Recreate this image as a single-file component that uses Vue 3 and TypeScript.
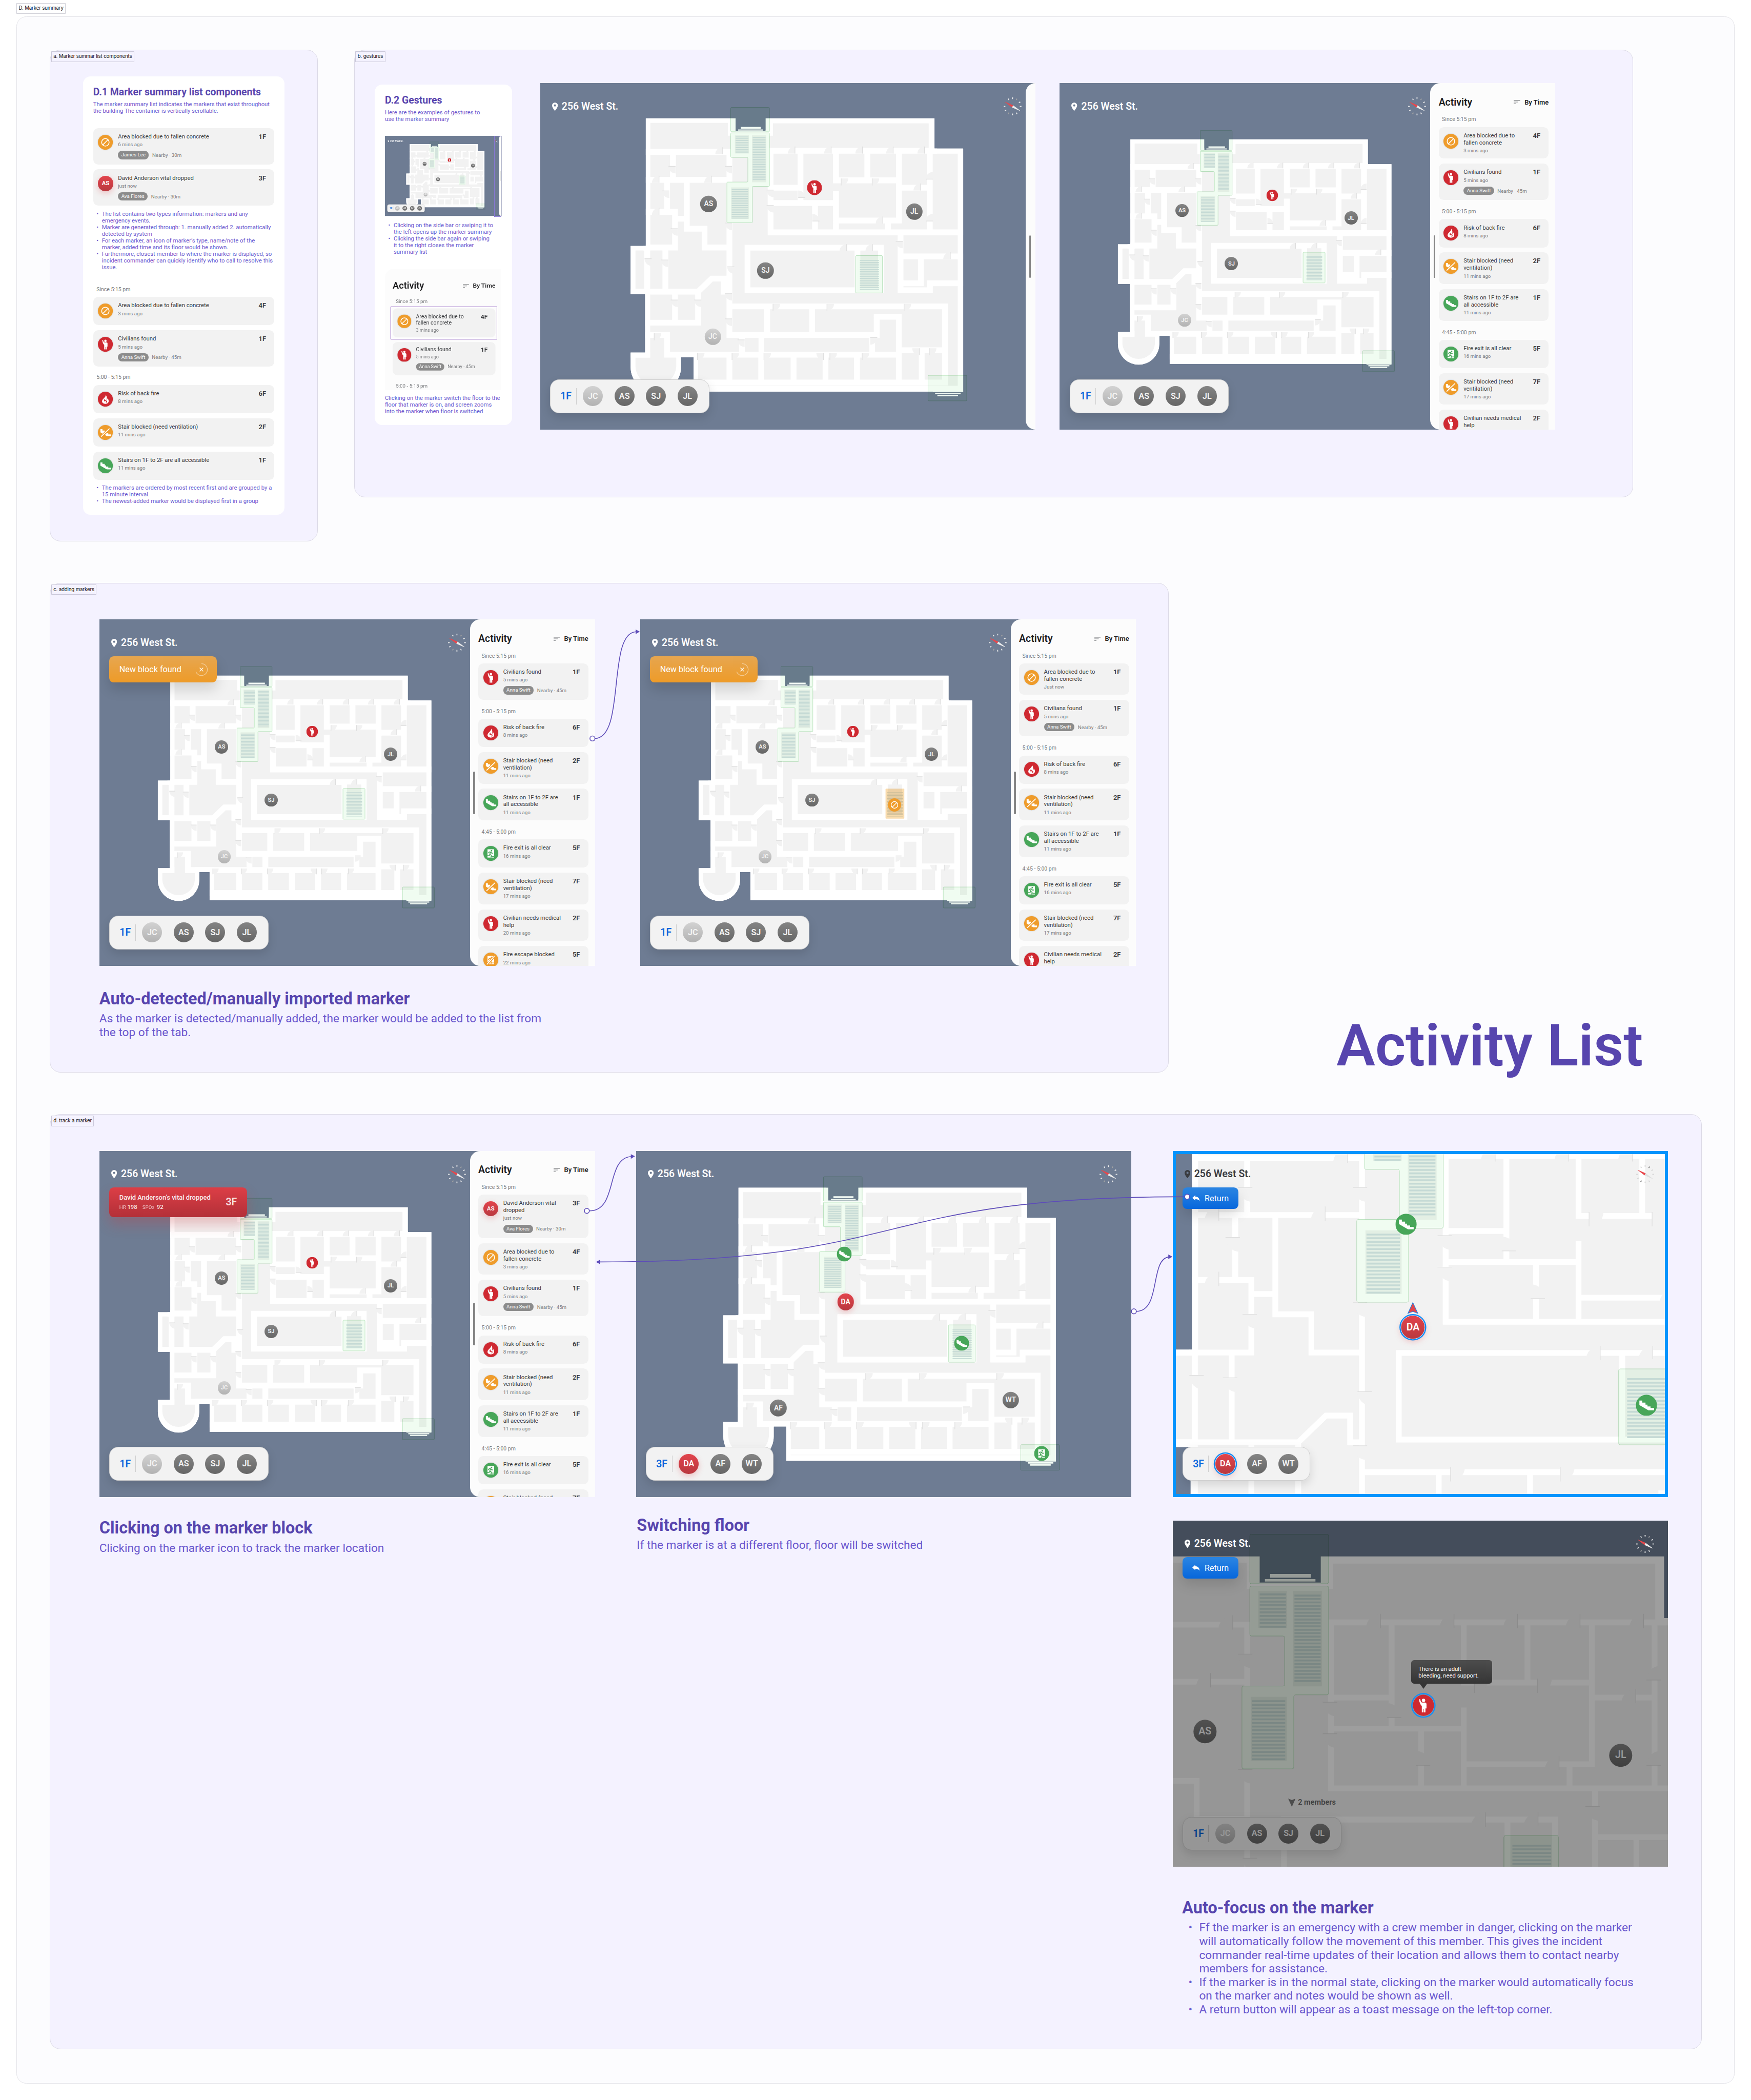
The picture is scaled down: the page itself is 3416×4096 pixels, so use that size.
<script setup lang="ts">
import { getCurrentInstance, type Component } from 'vue'

type Glyph = 'block' | 'person' | 'fire' | 'stairs' | 'noStairs' | 'exit' | 'noExit'
type Tone = 'member' | 'idle' | 'alert'

interface Entry {
  glyph?: Glyph
  initials?: string
  title: string
  time: string
  floor: string
  who?: string
  away?: string
}
interface Group {
  label: string
  entries: Entry[]
}
interface Pin {
  x: number
  y: number
  size: number
  glyph?: Glyph
  text?: string
  tone?: Tone
  ring?: boolean
}
interface Scene {
  map: { x: number; y: number; s: number }
  compass: number
  floor: string
  crew: { text: string; tone: Tone; ring?: boolean }[]
  pins: Pin[]
  groups?: Group[]
  sidebar?: boolean
  toast?: 'block' | 'vital' | 'return'
  dark?: boolean
  dim?: boolean
  framed?: boolean
  heading?: boolean
  highlight?: boolean
}

defineProps<{ scene?: Scene; entry?: Entry; glyph?: Glyph; groups?: Group[] }>()

// The component renders its own smaller parts: screens, lists, entries, glyphs.
const Part = getCurrentInstance()!.type as Component

/* ---------- floor plan geometry ---------- */
const outline =
  'M0 0H216.3V31.8H288.7V0H695.6V73H764.8V658.2H115.1V575.4H84.8V599.3A60.7 60.7 0 0 1 -36.6 599.3V564.4H-1.6V423.4H-36.6V307.7H0Z'
const floorArea =
  'M3.9 4H204.6V35H299.5V5H688.6V78.2H758.6V651.5H119V569.6H80.3V599.3A56.3 56.3 0 0 1 -32 599.3V569.6H3.5V417.7H-32V311.5H3.9Z'

const walls = [
  'M0 80.9H201.5V522.2', 'M65.4 80.9V148.4', 'M0 148.4H201.5', 'M51.3 148.4V225.4',
  'M0 225.4H70.4V311.3H0', 'M70.4 241.9H98.8', 'M98.8 148.4V266H141.6V311.3H201.5',
  'M3.5 311.3V417.7', 'M47.1 311.3V417.7', 'M-33 417.7H126L158.7 386.1H187.5V417.7H201.5',
  'M126 417.7V492.3H0', 'M70.4 417.7V492.3', 'M0 522.2H51.3V569.6H609.6', 'M-33 569.6H3.5',
  'M201.5 569.6V636.5', 'M278.1 569.6V636.5', 'M356 569.6V636.5', 'M433 569.6V636.5',
  'M508.8 569.6V636.5', 'M609.6 478V636.5', 'M664.8 558.9V636.5', 'M609.6 558.9H720.8',
  'M115 636.5H720.8', 'M201.5 453.1H720.8V636.5', 'M292.5 453.1V522.2', 'M400.7 453.1V522.2',
  'M201.5 522.2H556.3V478H609.6', 'M545.4 522.2V569.6', 'M278.5 522.2V569.6', 'M231.8 522.2V569.6',
  'M245.1 311.8H566.4V414.4H245.1Z', 'M510 311.8V414.4',
  'M300.7 78.2H695', 'M300.7 78.2V274.8H764', 'M372.7 78.2V204', 'M300.7 167.3H372.7',
  'M300.7 204H458.2', 'M407.7 204V274.8', 'M458.2 78.2V149.5H610', 'M458.2 182.500V274.8',
  'M533.7 78.2V149.5', 'M610 78.2V246.3H458.2', 'M583.5 246.3V274.8', 'M610 167.3H684.3',
  'M684.3 78.2V274.8', 'M613.8 274.8V414.4H684.6V397.4H764', 'M613.8 332.7H764',
  'M662.8 332.7V397.4H613.8',
].join('')

// x, y of the hinge, quadrant the leaf sweeps, and direction of the leaf
type Door = [number, number, 'ul' | 'ur' | 'dl' | 'dr', 'v' | 'h']
const doors: Door[] = [
  [184.4, 86.7, 'ul', 'v'], [31.9, 155.2, 'ul', 'v'], [157.9, 155.2, 'ul', 'v'], [31.9, 232.6, 'ul', 'v'],
  [359.4, 85, 'ul', 'v'], [446.6, 85, 'ul', 'v'], [522, 85, 'ul', 'v'], [596, 85, 'ul', 'v'], [671.4, 85, 'ul', 'v'],
  [662.1, 173.9, 'ul', 'v'], [571.1, 253.4, 'ul', 'v'], [483.9, 320.3, 'ul', 'v'], [546.2, 320.3, 'ul', 'v'],
  [733.7, 339.5, 'ul', 'v'], [470.7, 144.8, 'dr', 'v'], [545.4, 144.8, 'dr', 'v'], [20.2, 517.8, 'dr', 'v'],
  [306.5, 447, 'dr', 'v'], [436.5, 447, 'dr', 'v'], [622.4, 447, 'dr', 'v'], [124.5, 565, 'dr', 'v'],
  [207.7, 565, 'dr', 'v'], [284.7, 565, 'dr', 'v'], [443.5, 565, 'dr', 'v'], [521.3, 565, 'dr', 'v'],
  [683.1, 554, 'dr', 'v'], [427.9, 565, 'dl', 'v'], [659, 554, 'dl', 'v'],
  [71.6, 115.7, 'dl', 'h'], [207.7, 115.7, 'dl', 'h'], [56.8, 175, 'dl', 'h'], [77, 266, 'dl', 'h'],
  [207.7, 252.3, 'dl', 'h'], [308.1, 172.8, 'dl', 'h'], [308.1, 210.1, 'dl', 'h'], [619.3, 296.2, 'dl', 'h'],
  [53.7, 341.2, 'dl', 'h'], [14, 338.4, 'dl', 'h'], [77, 437.7, 'dl', 'h'], [133.8, 437.7, 'dl', 'h'],
  [207.7, 421.8, 'dl', 'h'], [207.7, 483.2, 'dl', 'h'], [238.1, 533.7, 'dl', 'h'], [213.2, 357.6, 'dl', 'h'],
  [540.7, 528.2, 'dr', 'h'], [691.7, 146.5, 'ul', 'h'], [691.7, 247.4, 'ul', 'h'],
  [401.4, 247.4, 'ur', 'h'], [367.2, 190.9, 'ur', 'h'],
]
const R = 17
const sweeps = doors
  .map(([x, y, q]) => {
    const dx = q[1] === 'l' ? -R : R
    const dy = q[0] === 'u' ? -R : R
    const flag = dx * dy > 0 ? 1 : 0
    return `M${x} ${y}H${x + dx}A${R} ${R} 0 0 ${flag} ${x} ${y + dy}Z`
  })
  .join('')
const leaves = doors
  .map(([x, y, q, axis]) =>
    axis === 'v' ? `M${x} ${y}v${q[0] === 'u' ? -R : R}` : `M${x} ${y}h${q[1] === 'l' ? -R : R}`,
  )
  .join('')

const flight = (x1: number, x2: number, y: number, count: number, pitch: number) =>
  Array.from({ length: count }, (_, i) => `M${x1} ${(y + i * pitch).toFixed(1)}H${x2}`).join('')
const treads = [
  flight(216.3, 247.4, 45, 10, 4.25),
  flight(257.5, 288.6, 46.4, 26, 4.05),
  flight(206.9, 246.6, 171.5, 17, 4.3),
  flight(515.8, 561.8, 342.8, 17, 4.3),
].join('')
const shaft =
  'M206.6 35.1H296a2 2 0 0 1 2 2V162a2 2 0 0 1 -2 2H258.7a2 2 0 0 0 -2 2V249.7a2 2 0 0 1 -2 2H197.3a2 2 0 0 1 -2 -2V155.6a2 2 0 0 1 2 -2H243.9a2 2 0 0 0 2 -2V96.3a2 2 0 0 0 -2 -2H206.6a2 2 0 0 1 -2 -2V37.1a2 2 0 0 1 2 -2Z'

const ticks = Array.from({ length: 12 }, (_, i) => i * 30).filter((a) => a !== 120 && a !== 300)

/* ---------- activity entries ---------- */
const risk: Entry = { glyph: 'fire', title: 'Risk of back fire', time: '8 mins ago', floor: '6F' }
const civilians: Entry = { glyph: 'person', title: 'Civilians found', time: '5 mins ago', floor: '1F', who: 'Anna Swift', away: '45m' }
const concrete: Entry = { glyph: 'block', title: 'Area blocked due to\nfallen concrete', time: '3 mins ago', floor: '4F' }
const stair2: Entry = { glyph: 'noStairs', title: 'Stair blocked (need\nventilation)', time: '11 mins ago', floor: '2F' }
const stairsOk: Entry = { glyph: 'stairs', title: 'Stairs on 1F to 2F are\nall accessible', time: '11 mins ago', floor: '1F' }
const exitClear: Entry = { glyph: 'exit', title: 'Fire exit is all clear', time: '16 mins ago', floor: '5F' }
const stair7: Entry = { glyph: 'noStairs', title: 'Stair blocked (need\nventilation)', time: '17 mins ago', floor: '7F' }
const medical: Entry = { glyph: 'person', title: 'Civilian needs medical\nhelp', time: '20 mins ago', floor: '2F' }
const escape: Entry = { glyph: 'noExit', title: 'Fire escape blocked', time: '22 mins ago', floor: '5F' }
const vital: Entry = { initials: 'AS', title: 'David Anderson vital\ndropped', time: 'just now', floor: '3F', who: 'Ava Flores', away: '30m' }

const middle: Group = { label: '5:00 - 5:15 pm', entries: [risk, stair2, stairsOk] }
const earlier: Group = { label: '4:45 - 5:00 pm', entries: [exitClear, stair7, medical, escape] }
const feed = (recent: Entry[]): Group[] => [{ label: 'Since 5:15 pm', entries: recent }, middle, earlier]

const samples: Entry[] = [
  { glyph: 'block', title: 'Area blocked due to fallen concrete', time: '6 mins ago', floor: '1F', who: 'James Lee', away: '30m' },
  { initials: 'AS', title: 'David Anderson vital dropped', time: 'just now', floor: '3F', who: 'Ava Flores', away: '30m' },
]
const sampleGroups: Group[] = [
  { label: 'Since 5:15 pm', entries: [{ ...concrete, title: 'Area blocked due to fallen concrete' }, civilians] },
  {
    label: '5:00 - 5:15 pm',
    entries: [
      risk,
      { ...stair2, title: 'Stair blocked (need ventilation)' },
      { ...stairsOk, title: 'Stairs on 1F to 2F are all accessible' },
    ],
  },
]
const snippet: Group[] = [
  { label: 'Since 5:15 pm', entries: [concrete, civilians] },
  { label: '5:00 - 5:15 pm', entries: [] },
]

/* ---------- screens ---------- */
const firstFloorCrew: Scene['crew'] = [
  { text: 'JC', tone: 'idle' },
  { text: 'AS', tone: 'member' },
  { text: 'SJ', tone: 'member' },
  { text: 'JL', tone: 'member' },
]
const smallPins: Pin[] = [
  { x: 294.7, y: 306.7, size: 32, text: 'AS', tone: 'member' },
  { x: 701.8, y: 324.8, size: 32, text: 'JL', tone: 'member' },
  { x: 413.8, y: 435, size: 32, text: 'SJ', tone: 'member' },
  { x: 301, y: 571, size: 32, text: 'JC', tone: 'idle' },
  { x: 512.6, y: 270, size: 28, glyph: 'person' },
]
const smallMap = { x: 170.8, y: 135.5, s: 0.8225 }

const collapsed: Scene = {
  map: { x: 254.3, y: 84.9, s: 1 },
  compass: 1138,
  floor: '1F',
  crew: firstFloorCrew,
  sidebar: true,
  pins: [
    { x: 406, y: 290.6, size: 40, text: 'AS', tone: 'member' },
    { x: 901.6, y: 309.8, size: 40, text: 'JL', tone: 'member' },
    { x: 543, y: 451.8, size: 40, text: 'SJ', tone: 'member' },
    { x: 416, y: 611, size: 40, text: 'JC', tone: 'idle' },
    { x: 661.2, y: 252.2, size: 36, glyph: 'person' },
  ],
}
const withPanel = (recent: Entry[], extra: Partial<Scene> = {}): Scene => ({
  map: smallMap,
  compass: 861,
  floor: '1F',
  crew: firstFloorCrew,
  pins: smallPins,
  groups: feed(recent),
  ...extra,
})
const expanded = withPanel([concrete, civilians])
const beforeImport = withPanel([civilians], { toast: 'block' })
const afterImport = withPanel([{ ...concrete, time: 'Just now', floor: '1F' }, civilians], {
  toast: 'block',
  highlight: true,
  pins: [...smallPins, { x: 612.8, y: 446.6, size: 32, glyph: 'block' }],
})
const vitalAlert = withPanel([vital, concrete, civilians], { toast: 'vital' })
const switched: Scene = {
  map: { x: 246.7, y: 88.2, s: 1 },
  compass: 1138,
  floor: '3F',
  crew: [
    { text: 'DA', tone: 'alert' },
    { text: 'AF', tone: 'member' },
    { text: 'WT', tone: 'member' },
  ],
  pins: [
    { x: 502, y: 249, size: 36, glyph: 'stairs' },
    { x: 785, y: 463, size: 36, glyph: 'stairs' },
    { x: 977.8, y: 729, size: 36, glyph: 'exit' },
    { x: 505, y: 364, size: 40, text: 'DA', tone: 'alert' },
    { x: 343, y: 619.7, size: 40, text: 'AF', tone: 'member' },
    { x: 903, y: 600, size: 40, text: 'WT', tone: 'member' },
  ],
}
const tracking: Scene = {
  map: { x: 46.1, y: -147.4, s: 2.033 },
  compass: 1138,
  floor: '3F',
  dark: true,
  framed: true,
  heading: true,
  toast: 'return',
  crew: [
    { text: 'DA', tone: 'alert', ring: true },
    { text: 'AF', tone: 'member' },
    { text: 'WT', tone: 'member' },
  ],
  pins: [
    { x: 563, y: 176.7, size: 51, glyph: 'stairs' },
    { x: 1141.8, y: 613, size: 51, glyph: 'stairs' },
    { x: 579, y: 425, size: 56, text: 'DA', tone: 'alert', ring: true },
  ],
}
const focused: Scene = {
  map: { x: -230.4, y: 86.2, s: 2.033 },
  compass: 1138,
  floor: '1F',
  dim: true,
  toast: 'return',
  crew: firstFloorCrew,
  pins: [
    { x: 78, y: 508, size: 56, text: 'AS', tone: 'member' },
    { x: 1079.6, y: 565, size: 56, text: 'JL', tone: 'member' },
  ],
}
</script>

<template>
  <!-- Marker glyph -->
  <svg v-if="glyph" class="glyph" viewBox="0 0 36 36">
    <circle cx="18" cy="18" r="18" :class="['disc', glyph]" />
    <g v-if="glyph === 'block'" fill="none" stroke="#fff" stroke-width="2">
      <circle cx="18" cy="18" r="9" />
      <path d="M11.8 24.2 24.2 11.8" />
    </g>
    <g v-else-if="glyph === 'person'" fill="#fff">
      <circle cx="18.1" cy="9.8" r="2.9" />
      <path d="M15.4 13.4H20.4C22.2 13.4 23.2 14.5 23.2 16.2V23.4H21.4V30.2H18.7V24.4H18V30.2H15.2V19.4C12.8 17.4 11.2 13.6 10.4 8L12.4 7.5C13 10.9 13.9 12.7 15.4 13.4Z" />
    </g>
    <g v-else-if="glyph === 'fire'">
      <path fill="#fff" d="M18.8 7.6C19 10.6 17.6 12.4 15.6 14.6 12.8 17.6 10 19.4 10 23.2 10 26.9 13.4 29.2 18 29.2S26 26.4 26 22.8C26 19.8 24.8 17.6 23 16 23 18.4 22 19.6 20.8 19.6 22.2 15.2 21.8 10.8 18.8 7.6Z" />
      <path fill="#cf2931" d="M16.8 17C14.8 19.2 14.4 21 15.4 22.8 16.2 24.2 18.2 23.6 18 21.8 20.4 22.8 20.6 25.6 18.6 26.6 21.8 26.6 22.8 24 21.4 21.6 19.2 21.8 16.6 20.2 16.8 17Z" />
    </g>
    <g v-else-if="glyph === 'stairs' || glyph === 'noStairs'">
      <path fill="#fff" d="M6 10H10.9V13.4H16.4V16.9H19.8V19.9H25V22.6H31V26.6H21.3L6 17.6Z" />
      <template v-if="glyph === 'noStairs'">
        <path stroke="#ef9c2b" stroke-width="6" d="M8 28.6 28 8.4" />
        <path stroke="#fff" stroke-width="2.2" d="M7.6 28 28 8.4" />
      </template>
    </g>
    <g v-else>
      <path fill="#fff" d="M10 8H26V28H10Z" />
      <g :class="['runner', glyph]" fill="none" stroke-width="2">
        <path d="M12 17.2 14.2 14.3 18 14.8 20.4 17.6 23.6 17.2M17.2 15 15.4 20 19.2 22.6 18.2 28M15.6 20 14.4 23.2 10 23.6M20 25H26" />
        <circle cx="19.6" cy="11.4" r=".9" />
      </g>
      <template v-if="glyph === 'noExit'">
        <path stroke="#ef9c2b" stroke-width="5" d="M9 29 27 8.6" />
        <path stroke="#fff" stroke-width="2" d="M8.4 28.6 27 8" />
      </template>
    </g>
  </svg>

  <!-- One activity entry -->
  <article v-else-if="entry" class="entry">
    <span v-if="entry.initials" class="avatar alert entry-avatar">{{ entry.initials }}</span>
    <Part v-else class="entry-icon" :glyph="entry.glyph" />
    <div class="entry-body">
      <div class="entry-title">{{ entry.title }}</div>
      <div class="entry-time">{{ entry.time }}</div>
      <div v-if="entry.who" class="near">
        <span class="who">{{ entry.who }}</span>
        <span>Nearby · {{ entry.away }}</span>
      </div>
    </div>
    <div class="entry-floor">{{ entry.floor }}</div>
  </article>

  <!-- Activity list -->
  <div v-else-if="groups" class="list">
    <div class="list-head">
      <div class="list-title">Activity</div>
      <svg class="sort" viewBox="0 0 16 10"><path d="M0 1H15.5M0 5H10.5M0 9H5" /></svg>
      <div class="sort-by">By Time</div>
    </div>
    <section v-for="g in groups" :key="g.label" class="group">
      <div class="group-label">{{ g.label }}</div>
      <Part v-for="(e, i) in g.entries" :key="i" :entry="e" />
    </section>
  </div>

  <!-- Tablet screen -->
  <div v-else-if="scene" class="screen" :class="{ dark: scene.dark, dim: scene.dim }">
    <svg class="map" viewBox="0 0 1194 834">
      <defs>
        <clipPath :id="`shell-${scene.map.x}`"><path :d="outline" /></clipPath>
      </defs>
      <rect width="1194" height="834" fill="#6e7c93" />
      <g :transform="`translate(${scene.map.x} ${scene.map.y}) scale(${scene.map.s})`">
        <path :d="outline" fill="#fff" />
        <g :clip-path="`url(#shell-${scene.map.x})`">
          <path :d="floorArea" fill="#f2f2f2" stroke="#fff" :stroke-width="14 / scene.map.s" />
          <path :d="walls" fill="none" stroke="#fff" stroke-linecap="square" :stroke-width="14 / scene.map.s" />
        </g>
        <path :d="sweeps" fill="#f2f2f2" />
        <path :d="leaves" fill="none" stroke="#dedede" :stroke-width="1.5 / scene.map.s" />
        <path :d="shaft" fill="#fff" />
        <path fill="#f2f2f2" d="M214.6 41H248.6V84.7H214.6ZM255.9 41H290V154H255.9ZM205.6 166.5H248.5V242H205.6Z" />
        <path d="M517.4 319H559.4V407H517.4Z" fill="#f2f2f2" />
        <path :d="treads" fill="none" stroke="#d2dde2" stroke-width="2.2" />
        <g class="tint">
          <rect x="204.6" y="-26.3" width="93.4" height="58.7" rx="2" />
          <path :d="shaft" />
          <rect v-if="scene.highlight" class="hot" x="511" y="331" width="55" height="88" rx="2" />
          <rect v-else x="505.7" y="330.7" width="64.6" height="90" rx="2" />
          <rect x="680" y="619.2" width="93.4" height="61.5" rx="2" />
        </g>
        <g class="tint-line" :stroke-width="1 / scene.map.s">
          <rect x="204.6" y="-26.3" width="93.4" height="58.7" rx="2" />
          <path :d="shaft" />
          <rect v-if="!scene.highlight" x="505.7" y="330.7" width="64.6" height="90" rx="2" />
          <rect x="680" y="619.2" width="93.4" height="61.5" rx="2" />
        </g>
        <path fill="#f2fbf4" d="M228.7 20.8H277V25.2H228.7ZM222.5 26.9H282.4V29.8H222.5ZM216.3 31H288.7V32.2H216.3ZM691.6 658H764.8V660H691.6ZM697.1 661.4H758.6V664.8H697.1ZM702.5 666.4H752.3V669.8H702.5Z" />
      </g>
    </svg>

    <template v-for="(p, i) in scene.pins" :key="i">
      <Part v-if="p.glyph" class="pin" :glyph="p.glyph" :style="{ left: p.x + 'px', top: p.y + 'px', width: p.size + 'px', height: p.size + 'px' }" />
      <span
        v-else
        class="avatar pin"
        :class="[p.tone, { ring: p.ring }]"
        :style="{ left: p.x + 'px', top: p.y + 'px', width: p.size + 'px', height: p.size + 'px', fontSize: p.size * 0.43 + 'px' }"
        >{{ p.text }}</span
      >
    </template>
    <svg v-if="scene.heading" class="heading" viewBox="0 0 28 30">
      <path d="M14 2 26 28 14 23.5 2 28Z" fill="#e0454c" stroke="#1a86e8" stroke-width="1.4" />
    </svg>

    <div class="roster">
      <span class="roster-floor">{{ scene.floor }}</span>
      <i class="rule"></i>
      <span v-for="c in scene.crew" :key="c.text" class="avatar" :class="[c.tone, { ring: c.ring }]">{{ c.text }}</span>
    </div>

    <template v-if="scene.dim">
      <div class="offscreen">
        <svg viewBox="0 0 18 20"><path d="M9 20 0 0 9 3.6 18 0Z" fill="#7d7d7d" /></svg>
        2 members
      </div>
      <div class="veil"></div>
      <div class="tip">There is an adult<br />bleeding, need support.</div>
      <Part class="pin target" glyph="person" style="left: 604px; top: 445px" />
    </template>

    <div class="place">
      <svg viewBox="0 0 14 20"><path fill-rule="evenodd" d="M7 0A7 7 0 0 0 0 7C0 12 7 20 7 20S14 12 14 7A7 7 0 0 0 7 0ZM7 4.4A2.6 2.6 0 1 1 7 9.6 2.6 2.6 0 0 1 7 4.4Z" /></svg>
      256 West St.
    </div>
    <svg class="compass" viewBox="-24 -24 48 48" :style="{ left: scene.compass - 24 + 'px' }">
      <path v-for="a in ticks" :key="a" class="tick" :class="{ faint: a === 30 || a === 210 }" d="M-1.3 -21.4H1.3L.9 -17.4H-.9Z" :transform="`rotate(${a})`" />
      <g transform="rotate(30.5)">
        <path fill="#e8474c" d="M-20.6 -.4 0 -2.8V2.8L-20.6 .4Z" />
        <path class="tail" d="M20.6 -.4 0 -2.8V2.8L20.6 .4Z" />
      </g>
    </svg>

    <div v-if="scene.toast === 'block'" class="toast block">
      New block found
      <svg viewBox="0 0 32 32">
        <path d="M16 1.6A14.4 14.4 0 1 1 2.6 21.2" fill="none" stroke="#fff" stroke-opacity=".45" stroke-width="1.6" />
        <path d="M11.8 11.8 20.2 20.2M20.2 11.8 11.8 20.2" stroke="#fff" stroke-width="1.6" />
      </svg>
    </div>
    <div v-else-if="scene.toast === 'vital'" class="toast vital">
      <div>
        <b>David Anderson’s vital dropped</b>
        <p><small>HR</small> 198 <small class="spo">SPO<sub>2</sub></small> 92</p>
      </div>
      <strong>3F</strong>
    </div>
    <div v-else-if="scene.toast === 'return'" class="toast return">
      <svg viewBox="0 0 18 15"><path fill="#fff" d="M7.4 0V3.6C13 3.6 17.4 6.6 17.6 14.6 15.6 10.8 12.4 9.6 7.4 9.8V13.4L0 6.7Z" /></svg>
      Return
    </div>

    <aside v-if="scene.groups || scene.sidebar" class="panel" :class="{ slim: scene.sidebar }">
      <i class="handle"></i>
      <Part v-if="scene.groups" :groups="scene.groups" />
    </aside>
    <div v-if="scene.framed" class="frame"></div>
  </div>

  <!-- Whole board -->
  <main v-else class="board">
    <div class="tag">D. Marker summary</div>
    <div class="sheet">
      <div class="row">
        <section class="area area-a">
          <div class="tag inner">a. Marker summar list components</div>
          <div class="card">
            <h2>D.1 Marker summary list components</h2>
            <p class="note">The marker summary list indicates the markers that exist throughout<br />the building The container is vertically scrollable.</p>
            <div class="stack">
              <Part v-for="(e, i) in samples" :key="i" :entry="e" />
            </div>
            <ul class="note">
              <li>The list contains two types information: markers and any<br />emergency events.</li>
              <li>Marker are generated through: 1. manually added 2. automatically<br />detected by system</li>
              <li>For each marker, an icon of marker’s type, name/note of the<br />marker, added time and its floor would be shown.</li>
              <li>Furthermore, closest member to where the marker is displayed, so<br />incident commander can quickly identify who to call to resolve this<br />issue.</li>
            </ul>
            <div class="sample-groups">
              <section v-for="g in sampleGroups" :key="g.label" class="group">
                <div class="group-label">{{ g.label }}</div>
                <Part v-for="(e, i) in g.entries" :key="i" :entry="e" />
              </section>
            </div>
            <ul class="note">
              <li>The markers are ordered by most recent first and are grouped by a<br />15 minute interval.</li>
              <li>The newest-added marker would be displayed first in a group</li>
            </ul>
          </div>
        </section>

        <section class="area area-b">
          <div class="tag inner">b. gestures</div>
          <div class="card gestures">
            <h2>D.2 Gestures</h2>
            <p class="note">Here are the examples of gestures to<br />use the marker summary</p>
            <div class="thumb"><Part :scene="collapsed" /><i class="thumb-mark"></i></div>
            <ul class="note">
              <li>Clicking on the side bar or swiping it to<br />the left opens up the marker summary</li>
              <li>Clicking the side bar again or swiping<br />it to the right closes the marker<br />summary list</li>
            </ul>
            <div class="excerpt"><Part :groups="snippet" /><i class="excerpt-mark"></i></div>
            <p class="note">Clicking on the marker switch the floor to the<br />floor that marker is on, and screen zooms<br />into the marker when floor is switched</p>
          </div>
          <Part :scene="collapsed" />
          <Part class="next" :scene="expanded" />
        </section>
      </div>

      <div class="row row-c">
        <section class="area area-c">
          <div class="tag inner">c. adding markers</div>
          <div class="col">
            <Part :scene="beforeImport" />
            <div class="caption cap-c">
              <h3>Auto-detected/manually imported marker</h3>
              <p>As the marker is detected/manually added, the marker would be added to the list from<br />the top of the tab.</p>
            </div>
          </div>
          <Part :scene="afterImport" />
        </section>
        <h1>Activity List</h1>
      </div>

      <section class="area area-d">
        <div class="tag inner">d. track a marker</div>
        <div class="col">
          <Part :scene="vitalAlert" />
          <div class="caption cap-d1">
            <h3>Clicking on the marker block</h3>
            <p>Clicking on the marker icon to track the marker location</p>
          </div>
        </div>
        <div class="col">
          <Part :scene="switched" />
          <div class="caption cap-d2">
            <h3>Switching floor</h3>
            <p>If the marker is at a different floor, floor will be switched</p>
          </div>
        </div>
        <div class="col">
          <Part :scene="tracking" />
          <Part class="below" :scene="focused" />
          <div class="caption cap-d3">
            <h3>Auto-focus on the marker</h3>
            <ul>
              <li>Ff the marker is an emergency with a crew member in danger, clicking on the marker<br />will automatically follow the movement of this member. This gives the incident<br />commander real-time updates of their location and allows them to contact nearby<br />members for assistance.</li>
              <li>If the marker is in the normal state, clicking on the marker would automatically focus<br />on the marker and notes would be shown as well.</li>
              <li>A return button will appear as a toast message on the left-top corner.</li>
            </ul>
          </div>
        </div>
      </section>
    </div>

    <svg class="links" viewBox="0 0 4219 5059">
      <g fill="none" stroke="#5d4cb9" stroke-width="2">
        <path d="M1433 1779C1508 1779 1462 1526 1532 1522" />
        <path d="M1420 2917C1490 2917 1458 2792 1520 2786" />
        <path d="M2855 2883C2090 2883 2206 3040 1444 3040" />
        <path d="M2738 3159C2798 3159 2770 3034 2816 3028" />
      </g>
      <g fill="#fff" stroke="#5d4cb9" stroke-width="2">
        <circle cx="1427.5" cy="1779" r="6" />
        <circle cx="1414" cy="2917" r="6" />
        <circle cx="2860.5" cy="2883" r="6" />
        <circle cx="2732" cy="3159" r="6" />
      </g>
      <path fill="#5d4cb9" d="M1541.500 1521.500 1531.500 1516.500V1527.500ZM1530 2785.500 1520 2780.500V2791.500ZM1436 3040 1446 3034.500V3045.500ZM2825 3027.500 2815 3022V3033Z" />
    </svg>
  </main>
</template>

<style>
html,
body {
  margin: 0;
  background: #fff;
}
</style>

<style scoped>
* {
  box-sizing: border-box;
}
h1,
h2,
h3,
p,
ul {
  margin: 0;
  padding: 0;
}
.board {
  position: relative;
  width: 4220px;
  height: 5059px;
  padding: 8px 40px 0;
  zoom: 0.80967;
  overflow: hidden;
  background: #fff;
  font-family: Roboto, 'Liberation Sans', sans-serif;
  color: #37393c;
}
.tag {
  width: max-content;
  height: 25.5px;
  padding: 0 4px;
  border: 1px solid #d0d0d8;
  border-radius: 1px;
  font: 12px/23px Inter, 'Liberation Sans', sans-serif;
  letter-spacing: -0.2px;
  color: #111;
}
.tag.inner {
  position: absolute;
  left: 2px;
  top: 2px;
  background: #f4f2ff;
  border-color: #cbc9da;
}
.sheet {
  width: 4139px;
  height: 4979px;
  margin-top: 6.5px;
  padding: 79px;
  border: 1px solid #e3e3e8;
  border-radius: 24px;
  background: #fcfcfe;
}
.row {
  display: flex;
  gap: 88px;
  height: 1184px;
  align-items: flex-start;
}
.row-c {
  height: 1180px;
  margin: 100px 0;
}
.area {
  position: relative;
  display: flex;
  align-items: flex-start;
  flex: none;
  border: 1px solid #dcdae6;
  border-radius: 26px;
  background: #f4f2ff;
}
.area-a {
  width: 645px;
  height: 1184px;
  padding: 63px 79px;
}
.area-b {
  width: 3082px;
  height: 1078px;
  padding: 79px 49px;
}
.area-c {
  width: 2696px;
  height: 1180px;
  padding: 87px 118px;
  gap: 109px;
}
.area-d {
  width: 3980px;
  height: 2253px;
  padding: 87px 118px;
  gap: 99px;
}
.col {
  width: 1194px;
}
.next {
  margin-left: 58px;
}
.below {
  margin-top: 57px;
}

/* Text cards */
.card {
  width: 485px;
  height: 1056px;
  padding: 21px 24px;
  border-radius: 18px;
  background: #fff;
}
h2 {
  font: 700 24px/34px Roboto, sans-serif;
  color: #5745ae;
  white-space: nowrap;
}
.note {
  font-size: 14px;
  line-height: 16px;
  color: #6a57ce;
  white-space: nowrap;
}
ul {
  list-style: none;
}
.card ul {
  padding-left: 21px;
}
li {
  position: relative;
}
li::before {
  content: '•';
  position: absolute;
  left: -13px;
}
.stack {
  display: flex;
  flex-direction: column;
  gap: 12px;
  margin: 33px 0 12px;
}
.card h2 + .note {
  padding-top: 4px;
}
.sample-groups {
  margin: 38px 0 12px;
}
.sample-groups .group .group-label {
  margin: 18.5px 0 -0.7px;
}
.sample-groups .group:first-child .group-label {
  margin-top: 0;
}
.gestures {
  width: 330px;
  height: 820px;
  margin: 3.5px 68px 0 0;
}
.thumb {
  position: relative;
  width: 281px;
  height: 193px;
  margin: 33px 0 14px;
}
.thumb .screen {
  transform: scale(0.2353, 0.2314);
  transform-origin: 0 0;
}
.thumb-mark {
  position: absolute;
  right: 0;
  top: 0;
  width: 17.5px;
  height: 195px;
  border: 1px solid #8a78d8;
}
.excerpt {
  position: relative;
  width: 281px;
  height: 292px;
  margin: 32px 0 12px;
  overflow: hidden;
  border-radius: 22px 0 0 0;
  background: #fcfcfc;
}
.excerpt .list {
  width: 301px;
  transform: scale(0.9335, 0.912);
  transform-origin: 0 0;
}
.excerpt-mark {
  position: absolute;
  left: 14px;
  top: 91.5px;
  width: 257px;
  height: 79px;
  border: 2px solid #7d45b8;
}
.gestures .excerpt + .note {
  padding: 0;
}

/* Captions */
.caption {
  white-space: nowrap;
  color: #6a57ce;
  font-size: 28px;
  line-height: 32.8px;
}
h3 {
  margin-bottom: 8px;
  font: 700 40px/48px Roboto, sans-serif;
  color: #5745ae;
}
.cap-c {
  padding-top: 56px;
}
.cap-d1 {
  padding-top: 51px;
}
.cap-d2 {
  padding: 44px 0 0 2px;
}
.cap-d3 {
  padding: 75px 0 0 23px;
}
.cap-d3 ul {
  padding-left: 41px;
}
.cap-d3 li::before {
  left: -26px;
}
h1 {
  margin: 1022px 0 0 316px;
  font: 600 140px/188px Roboto, sans-serif;
  color: #5745ae;
  white-space: nowrap;
}

/* Activity list */
.list {
  padding: 30px 16px 0 20px;
}
.list-head {
  display: flex;
  align-items: center;
  height: 32px;
}
.list-title {
  flex: 1;
  font: 600 24px/32px Roboto, sans-serif;
  color: #1d1d1f;
}
.sort {
  width: 16px;
  height: 10px;
  margin-right: 10px;
  fill: none;
  stroke: #77797c;
  stroke-width: 1.4;
}
.sort-by {
  font: 600 16px/32px Roboto, sans-serif;
  color: #1d1d1f;
}
.group {
  display: flex;
  flex-direction: column;
  gap: 12.2px;
}
.group-label {
  margin: 21px 0 -1.2px;
  padding-left: 8px;
  font-size: 13px;
  line-height: 14px;
  color: #77797c;
}
.list-head + .group .group-label {
  margin-top: 18.5px;
}
.entry {
  display: flex;
  flex: none;
  min-height: 68px;
  padding: 12.5px 20px 12.5px 12px;
  border-radius: 12px;
  background: #f2f2f2;
}
.entry-icon,
.avatar.entry-avatar {
  flex: none;
  width: 36px;
  height: 36px;
  margin: 3.5px 12px 0 0;
}
.entry-icon {
  filter: drop-shadow(0 1px 1.5px rgba(0, 0, 0, 0.18));
}
.avatar.entry-avatar {
  font-size: 14px;
}
.entry-body {
  flex: 1;
}
.entry-title {
  font-size: 14px;
  line-height: 17px;
  white-space: pre;
}
.entry-time {
  margin-top: 3.2px;
  font-size: 12px;
  line-height: 14px;
  color: #77797c;
}
.near {
  display: flex;
  align-items: center;
  gap: 8px;
  height: 20px;
  margin-top: 8.6px;
  font-size: 12px;
  color: #77797c;
}
.who {
  height: 20px;
  padding: 0 8px;
  border-radius: 10px;
  line-height: 20px;
  background: #8c8c8c;
  color: #fff;
}
.entry-floor {
  font: 600 16px/18px Roboto, sans-serif;
}

/* Glyphs and avatars */
.glyph {
  display: block;
}
.disc {
  fill: #ef9c2b;
}
.disc.person,
.disc.fire {
  fill: #cf2931;
}
.disc.stairs,
.disc.exit {
  fill: #47a659;
}
.runner {
  stroke: #47a659;
}
.runner.noExit {
  stroke: #ef9c2b;
}
.avatar {
  display: flex;
  flex: none;
  align-items: center;
  justify-content: center;
  width: 48px;
  height: 48px;
  border-radius: 50%;
  font-size: 20px;
  font-weight: 600;
  line-height: 1;
  color: #f4f4f4;
  background: linear-gradient(#848484, #666);
}
.avatar.idle {
  background: linear-gradient(#d2d2d2, #b2b2b2);
}
.avatar.alert {
  color: #fff;
  background: linear-gradient(#e2444c, #b9383f);
  box-shadow: 0 5px 14px rgba(226, 68, 76, 0.28);
}
.avatar.ring {
  box-shadow:
    0 0 0 1px #fff,
    0 0 0 4px #0d8cf7,
    0 5px 16px rgba(226, 68, 76, 0.35);
}

/* Screen */
.screen {
  position: relative;
  flex: none;
  width: 1194px;
  height: 834px;
  overflow: hidden;
  background: #6e7c93;
}
.map {
  display: block;
  width: 1194px;
  height: 834px;
  isolation: isolate;
}
.tint {
  fill: #f0fcf1;
  mix-blend-mode: multiply;
}
.tint .hot {
  fill: #f9dcae;
}
.tint-line {
  fill: none;
  stroke: #b2dfb7;
  mix-blend-mode: multiply;
}
.pin {
  position: absolute;
  transform: translate(-50%, -50%);
}
.heading {
  position: absolute;
  left: 565px;
  top: 364px;
  width: 28px;
  height: 30px;
}
.roster {
  position: absolute;
  left: 24px;
  top: 713.5px;
  display: flex;
  align-items: center;
  gap: 28px;
  height: 81px;
  padding: 0 27px 0 22px;
  border: 1px solid #cfcfcf;
  border-radius: 22px;
  background: #f2f2f2;
  box-shadow: 0 10px 24px rgba(0, 0, 0, 0.12);
}
.roster-floor {
  width: 30px;
  margin-right: -19px;
  text-align: center;
  font-size: 24px;
  font-weight: 600;
  color: #0a66dc;
}
.rule {
  width: 1px;
  height: 40px;
  margin-right: -12px;
  background: #cfcfcf;
}
.place {
  position: absolute;
  left: 28.5px;
  top: 40px;
  display: flex;
  align-items: center;
  gap: 9.5px;
  font: 600 24px/32px Roboto, sans-serif;
  color: #fff;
}
.place svg {
  width: 14px;
  height: 20px;
  fill: currentColor;
}
.dark .place {
  color: #3a3c40;
}
.compass {
  position: absolute;
  top: 32px;
  width: 48px;
  height: 48px;
}
.tick,
.tail {
  fill: #ececec;
}
.tick.faint {
  fill: #a3a3a3;
}
.dark .tick {
  fill: #d4d4d4;
}
.dark .tick.faint {
  fill: #777;
}
.dark .tail {
  fill: #dedede;
}
.toast {
  position: absolute;
  left: 24px;
  top: 88px;
  display: flex;
  align-items: center;
  border-radius: 11px;
  font-size: 20px;
  color: #fff;
}
.toast.block {
  width: 259.5px;
  height: 64px;
  padding: 0 22px 0 24px;
  justify-content: space-between;
  background: linear-gradient(#e6a650, #ee9b28);
  box-shadow: 0 16px 32px rgba(0, 0, 0, 0.14);
}
.toast.block svg {
  width: 32px;
  height: 32px;
}
.toast.vital {
  width: 331.5px;
  height: 72px;
  padding: 0 24px;
  justify-content: space-between;
  background: linear-gradient(#dc3e46, #b33038);
  box-shadow: 0 18px 32px rgba(200, 60, 66, 0.3);
  color: #f8e4e5;
}
.toast.vital b {
  display: block;
  font: 600 16px/24px Roboto, sans-serif;
}
.toast.vital p {
  font: 500 14px/20px Roboto, sans-serif;
}
.toast.vital small {
  font-size: 12px;
  font-weight: 400;
  opacity: 0.8;
}
.toast.vital .spo {
  margin-left: 9px;
  margin-right: 3px;
}
.toast.vital sub {
  font-size: 9px;
  vertical-align: baseline;
}
.toast.vital strong {
  font: 600 24px/32px Roboto, sans-serif;
}
.toast.return {
  width: 135px;
  height: 52px;
  padding-left: 24px;
  gap: 11px;
  background: linear-gradient(#2b85e2, #0767dc);
  box-shadow: 0 14px 30px rgba(0, 0, 0, 0.13);
}
.toast.return svg {
  width: 18px;
  height: 15px;
}
.panel {
  position: absolute;
  right: 0;
  top: 0;
  width: 301px;
  height: 834px;
  overflow: hidden;
  border-radius: 24px 0 0 24px;
  background: #fcfcfc;
}
.panel.slim {
  width: 24px;
}
.handle {
  position: absolute;
  left: 8px;
  top: 366px;
  width: 4px;
  height: 103px;
  border-radius: 2px;
  background: #868686;
}
.frame {
  position: absolute;
  inset: 0;
  border: 8px solid #0594fd;
}
.veil {
  position: absolute;
  inset: 0;
  background: rgba(0, 0, 0, 0.38);
}
.offscreen {
  position: absolute;
  left: 278px;
  top: 666px;
  display: flex;
  align-items: center;
  gap: 6px;
  font: 600 18px/26px Roboto, sans-serif;
  color: #666;
}
.offscreen svg {
  width: 18px;
  height: 20px;
}
.tip {
  position: absolute;
  left: 574.5px;
  top: 336px;
  width: 196px;
  height: 56.5px;
  padding: 13px 18px;
  border-radius: 7px;
  background: linear-gradient(#4d4d4d, #353535);
  font-size: 14px;
  line-height: 16px;
  white-space: nowrap;
  color: #fff;
}
.tip::after {
  content: '';
  position: absolute;
  left: 20px;
  top: 56px;
  border: 10px solid transparent;
  border-top: 14px solid #353535;
  border-bottom: 0;
}
.target {
  width: 51px;
  height: 51px;
  border-radius: 50%;
  box-shadow:
    0 0 0 1px #9a9a9a,
    0 0 0 4px #168ff5;
}
.links {
  position: absolute;
  left: 0;
  top: 0;
  width: 4219px;
  height: 5059px;
}
</style>
